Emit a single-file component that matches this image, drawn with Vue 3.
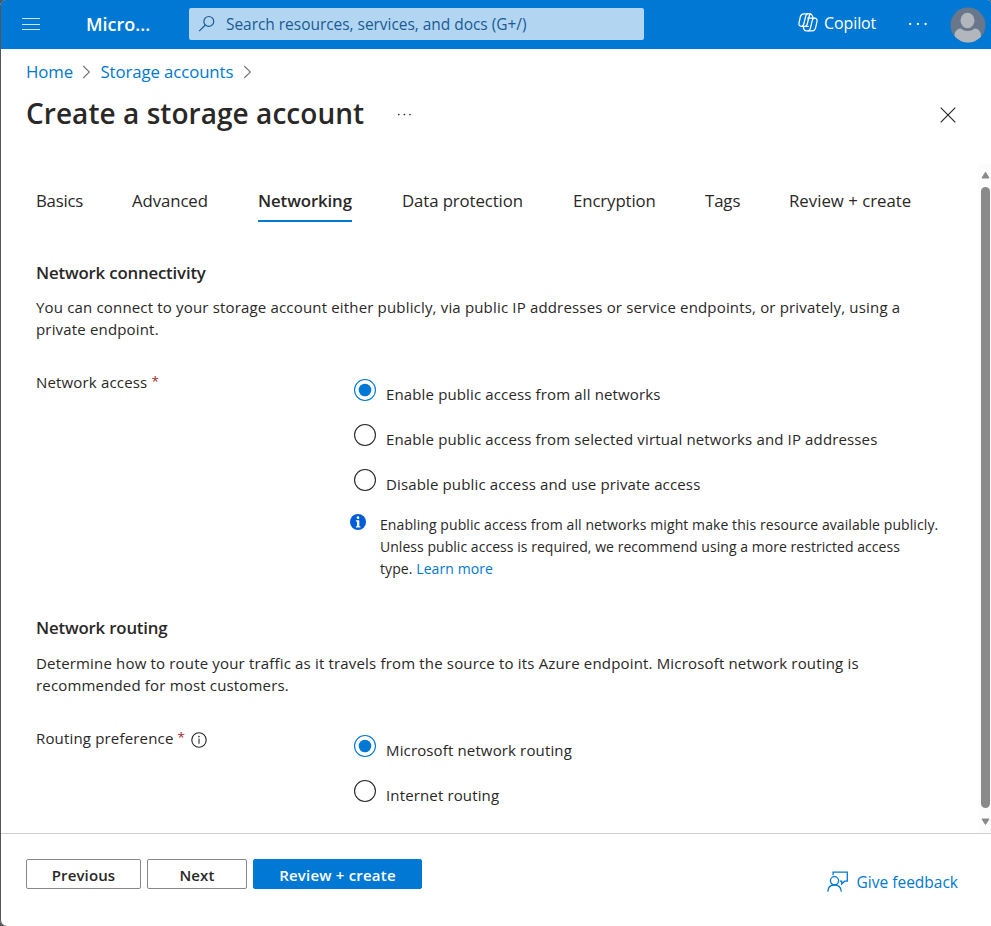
<script setup>
import { ref } from 'vue'

const tabs = ['Basics', 'Advanced', 'Networking', 'Data protection', 'Encryption', 'Tags', 'Review + create']
const activeTab = ref('Networking')

const accessOptions = [
  'Enable public access from all networks',
  'Enable public access from selected virtual networks and IP addresses',
  'Disable public access and use private access',
]
const access = ref(0)

const routingOptions = ['Microsoft network routing', 'Internet routing']
const routing = ref(0)
</script>

<template>
  <div class="window">
    <header class="topbar">
      <svg class="menu" width="18" height="13" viewBox="0 0 18 13"><path d="M0 .5h18M0 6.500h18M0 11.500h18" stroke="#cfe5f7" stroke-width="1.200" /></svg>
      <span class="brand">Micro...</span>
      <div class="search">
        <svg width="18" height="18" viewBox="0 0 18 18" fill="none" stroke="#1b5a94" stroke-width="1.2"><circle cx="10.8" cy="6.4" r="4.9" /><path d="M7.3 10 1.2 16.2" /></svg>
        <span>Search resources, services, and docs (G+/)</span>
      </div>
      <div class="copilot">
        <svg width="20" height="19" viewBox="0 0 20 19" fill="none" stroke="#fff" stroke-width="1.25" stroke-linejoin="round" stroke-linecap="round">
          <path d="M10.2 13.3H3.4C1.5 13.3.6 12 1 10.100L2.300 4C2.800 1.900 3.900.8 5.800.8H12c1.500 0 2 .8 2.500 2.300l.5 1.900" />
          <path d="M9.300.9C8.300 1.300 7.900 2.200 7.600 3.500L5.900 10.500C5.500 12.200 5 13 4 13.300" />
          <path d="M9.800 5.200H16.500C18.500 5.200 19.400 6.500 19 8.400L17.700 14.400C17.200 16.600 16.100 17.900 14.200 17.900H8.200C6.700 17.900 6.100 17 5.700 15.500L5.200 13.400" />
          <path d="M16 5.200C15 5.500 14.500 6.300 14.200 7.700L12.500 14.900C12.100 16.600 11.600 17.500 10.700 17.800" />
          <path d="M12.600.9C11.700 1.400 11.400 2.300 11.100 3.500L9.100 11.500C8.800 12.700 8.300 13.200 7.300 13.300" />
        </svg>
        <span>Copilot</span>
      </div>
      <svg class="more" width="20" height="4" viewBox="0 0 20 4" fill="#fff"><circle cx="2.200" cy="2" r="1.150" /><circle cx="9.900" cy="2" r="1.150" /><circle cx="17.600" cy="2" r="1.150" /></svg>
      <svg class="avatar" width="36" height="36" viewBox="0 0 36 36">
        <defs><clipPath id="face"><circle cx="18" cy="18" r="17.500" /></clipPath></defs>
        <circle cx="18" cy="18" r="17.500" fill="#69778b" />
        <g clip-path="url(#face)" fill="#b1b7bd">
          <ellipse cx="17.500" cy="13.500" rx="7" ry="7.700" />
          <path d="M4.500 36V29c0-4.500 2.300-7.300 6.300-7.500 2 1.700 4.200 2.500 6.900 2.500s4.900-.8 6.900-2.500c4 .2 6.400 3 6.400 7.500v7z" />
        </g>
      </svg>
    </header>

    <nav class="crumbs">
      <a>Home</a>
      <svg width="9" height="14" viewBox="0 0 9 14"><path d="M1.200 1 7.400 7 1.200 13" /></svg>
      <a class="wide">Storage accounts</a>
      <svg width="9" height="14" viewBox="0 0 9 14"><path d="M1.200 1 7.400 7 1.200 13" /></svg>
    </nav>

    <div class="titlebar">
      <h1>Create a storage account</h1>
      <svg class="dots" width="15" height="3" viewBox="0 0 15 3" fill="#292827"><circle cx="1.800" cy="1.500" r=".85" /><circle cx="7.400" cy="1.500" r=".85" /><circle cx="13" cy="1.500" r=".85" /></svg>
      <svg class="close" width="16" height="16" viewBox="0 0 16 16"><path d="m.7.7 14.600 14.600M15.300.7.7 15.300" stroke="#292827" stroke-width="1.200" /></svg>
    </div>

    <div class="scroller">
      <main>
        <div class="tabs">
          <div v-for="t in tabs" :key="t" class="tab" :class="{ active: t === activeTab }" @click="activeTab = t">{{ t }}</div>
        </div>

        <section>
          <h2>Network connectivity</h2>
          <p>You can connect to your storage account either publicly, via public IP addresses or service endpoints, or privately, using a<br>private endpoint.</p>
          <div class="field">
            <div class="label">Network access <i>*</i></div>
            <div class="options">
              <div v-for="(o, i) in accessOptions" :key="o" class="option" @click="access = i">
                <svg width="22" height="22" viewBox="0 0 22 22" :class="{ on: access === i }"><circle class="ring" cx="11" cy="11" r="10.450" /><circle v-if="access === i" class="dot" cx="11" cy="11" r="6.300" /></svg>
                <span>{{ o }}</span>
              </div>
              <div class="note">
                <svg width="16" height="16" viewBox="0 0 16 16"><circle cx="8" cy="8" r="8" fill="#015cda" /><circle cx="8" cy="3.700" r="1.350" fill="#fff" /><path d="M5.900 6.200H9.300V12.200H10.400V13.400H5.900V12.200H7V7.400H5.900z" fill="#fff" /></svg>
                <div>Enabling public access from all networks might make this resource available publicly.<br><span class="tight">Unless public access is required, we recommend using a more restricted access</span><br>type. <a>Learn more</a></div>
              </div>
            </div>
          </div>
        </section>

        <section class="second">
          <h2>Network routing</h2>
          <p>Determine how to route your traffic as it travels from the source to its Azure endpoint. Microsoft network routing is<br>recommended for most customers.</p>
          <div class="field">
            <div class="label">Routing preference <i>*</i>
              <svg width="16" height="16" viewBox="0 0 16 16"><circle cx="8" cy="8" r="7.200" fill="none" stroke="#292827" stroke-width="1.100" /><path d="M8 6.600V11.700" stroke="#292827" stroke-width="1.100" /><circle cx="8" cy="4.600" r=".8" fill="#292827" /></svg>
            </div>
            <div class="options">
              <div v-for="(o, i) in routingOptions" :key="o" class="option" @click="routing = i">
                <svg width="22" height="22" viewBox="0 0 22 22" :class="{ on: routing === i }"><circle class="ring" cx="11" cy="11" r="10.450" /><circle v-if="routing === i" class="dot" cx="11" cy="11" r="6.300" /></svg>
                <span>{{ o }}</span>
              </div>
            </div>
          </div>
        </section>
      </main>
      <div class="scrollbar">
        <svg width="9" height="8" viewBox="0 0 9 8"><path d="M4.500 1.300 8 7H1z" fill="#8a8a8a" stroke="#8a8a8a" stroke-linejoin="round" /></svg>
        <div class="thumb"></div>
        <svg width="9" height="8" viewBox="0 0 9 8"><path d="M4.500 6.500 8 1H1z" fill="#8a8a8a" stroke="#8a8a8a" stroke-linejoin="round" /></svg>
      </div>
    </div>

    <footer>
      <button class="prev">Previous</button>
      <button class="next">Next</button>
      <button class="primary">Review + create</button>
      <a class="feedback">
        <svg width="22" height="21" viewBox="0 0 22 21" fill="none" stroke="#0078d4" stroke-width="1.300">
          <path d="M6.100 4.200V1.100H20.300V10.200H17.600L14.700 13V10.200H12.900" />
          <circle cx="7.500" cy="9.800" r="4.100" />
          <path d="M.8 20.600C1 16.500 3.700 14 7.500 14s6.500 2.500 6.800 6.600" />
        </svg>
        <span>Give feedback</span>
      </a>
    </footer>
  </div>
</template>

<style>
body {
  background: #53545a;
}
</style>

<style scoped>
.window {
  box-sizing: border-box;
  width: 991px;
  height: 926px;
  padding-left: 1px;
  display: flex;
  flex-direction: column;
  background: #fff;
  border-radius: 6px 4px 0 6px;
  overflow: hidden;
  box-shadow: inset 1px 0 #53545a;
  color: #292827;
  font: 15px/22px "Open Sans", "Noto Sans", sans-serif;
  letter-spacing: 0.17px;
}
svg { display: block; flex: none; }
h1, h2, p { margin: 0; }
a { color: #0078d4; }

.topbar {
  flex: none;
  height: 49px;
  display: flex;
  align-items: center;
  background: #0078d4;
  color: #fff;
}
.menu { margin-left: 21px; }
.brand {
  width: 103px;
  margin: -2px 0 0 46px;
  font-size: 18px;
  font-weight: 600;
  letter-spacing: 0;
}
.search {
  box-sizing: border-box;
  width: 455px;
  height: 32px;
  margin-top: -1px;
  padding-left: 9px;
  display: flex;
  align-items: center;
  gap: 10px;
  border-radius: 2px;
  background: #b2d6f2;
  color: #1b5a94;
  font-size: 15.5px;
  letter-spacing: -0.04px;
}
.copilot {
  display: flex;
  align-items: center;
  gap: 6px;
  width: 110px;
  margin: -4px 0 0 154px;
  font-size: 16px;
  letter-spacing: -0.1px;
}
.more { margin: 0 22px 1px 0; }

.crumbs {
  flex: none;
  height: 24px;
  margin: 11px 0 0 25px;
  display: flex;
  align-items: center;
  font-size: 16.8px;
  line-height: 24px;
  letter-spacing: -0.1px;
}
.crumbs a { width: 56px; }
.crumbs a.wide { width: 142px; margin-left: 9.5px; }
.crumbs path { fill: none; stroke: #777; stroke-width: 1.100; }

.titlebar {
  flex: none;
  display: flex;
  align-items: center;
  height: 40px;
  margin: 8px 35px 0 25px;
}
h1 {
  width: 371px;
  padding-top: 1px;
  font-size: 28px;
  line-height: 40px;
  font-weight: 600;
  letter-spacing: 0.05px;
}
.dots { margin-top: 4px; }
.close { margin: 5px 0 0 auto; }

.scroller {
  flex: none;
  display: flex;
  height: 669px;
  margin-top: 32px;
}
main { flex: 1; padding: 25px 0 0 35px; }
.tabs {
  display: grid;
  grid-template-columns: 46px 76px 94px 121px 82px 34px 122px;
  column-gap: 50px;
}
.tab {
  height: 31px;
  border-bottom: 2px solid transparent;
  font-size: 16.8px;
  line-height: 24px;
  letter-spacing: -0.1px;
  white-space: nowrap;
}
.tab:first-child { letter-spacing: -0.25px; }
.tab:last-child { letter-spacing: 0; }
.tab.active {
  border-color: #0078d4;
  font-weight: 600;
  letter-spacing: -0.1px;
}
section { height: 317px; margin-top: 39px; }
section.second { margin-top: 38px; }
h2 {
  font-size: 16.8px;
  line-height: 24px;
  font-weight: 600;
  letter-spacing: -0.17px;
}
p { margin-top: 11px; white-space: nowrap; }
.second p { margin-top: 12px; }
.field { display: flex; margin-top: 31px; }
.label { display: flex; width: 318px; }
.label i { margin-left: 4px; color: #a4262c; font-size: 13.5px; line-height: 20px; font-style: normal; }
.label svg { margin: 4.500px 0 0 6px; }
.options { padding-top: 8px; }
.option {
  display: flex;
  gap: 10px;
  height: 45px;
}
.option span { padding-top: 4px; letter-spacing: 0.14px; }
.ring { fill: #fff; stroke: #292827; stroke-width: 1.100; }
.on .ring { stroke: #0078d4; }
.dot { fill: #0078d4; }
.note {
  display: flex;
  gap: 14px;
  margin-left: -4px;
  font-size: 14px;
  letter-spacing: 0.085px;
  white-space: nowrap;
}
.note svg { margin-top: -0.5px; }
.note .tight { letter-spacing: 0.04px; }

.scrollbar {
  box-sizing: border-box;
  width: 13px;
  padding: 7px 1px 7px 3px;
  display: flex;
  flex-direction: column;
  background: #fcfcfc;
}
.thumb {
  flex: 1;
  margin: 8px 0 10px;
  border-radius: 5px;
  background: #8a8a8a;
}

footer {
  flex: 1;
  display: flex;
  gap: 6px;
  padding: 25px 33px 0 25px;
  border-top: 1px solid #d2d0ce;
}
button {
  box-sizing: border-box;
  height: 30px;
  padding: 2px 0 0;
  border: 1px solid #8a8886;
  border-radius: 2px;
  background: #fff;
  color: #292827;
  font: 600 15px/22px "Open Sans", "Noto Sans", sans-serif;
  letter-spacing: 0.12px;
}
.prev { width: 115px; }
.next { width: 100px; }
.primary {
  width: 169px;
  border-color: #0078d4;
  background: #0078d4;
  color: #fff;
  letter-spacing: 0.2px;
}
.feedback {
  display: flex;
  align-items: center;
  gap: 8px;
  height: 22px;
  margin: 12px 0 0 auto;
  font-size: 15.500px;
  letter-spacing: 0;
}
.feedback svg { margin-top: -1px; }
</style>
